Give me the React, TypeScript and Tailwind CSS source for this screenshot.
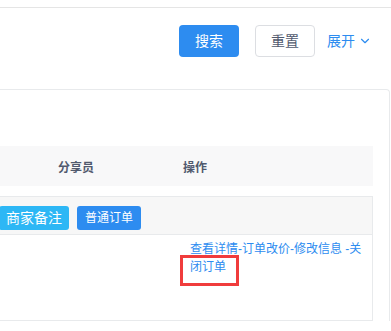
import { ChevronDown } from "lucide-react";

const FONT = { fontFamily: '"Liberation Sans", "Noto Sans CJK SC", sans-serif' };

export default function App() {
  return (
    <div className="w-[391px] h-[331px] overflow-hidden bg-white relative" style={FONT}>
      {/* top divider */}
      <div className="h-[7px]" />
      <div className="border-t border-[#e5e5e5]" />

      {/* search actions */}
      <div className="flex items-center justify-end pt-[17px] pr-[19px]">
        <button className="w-[60px] h-[32px] rounded-[4px] bg-[#2d8cf0] text-white text-[14px]">
          搜索
        </button>
        <button className="ml-[16px] w-[60px] h-[32px] rounded-[4px] border border-[#dcdee2] bg-white text-[#515a6e] text-[14px]">
          重置
        </button>
        <div className="ml-[12px] flex items-center text-[#2d8cf0] text-[14px]">
          展开
          <ChevronDown size={14} strokeWidth={2} className="ml-[3px]" />
        </div>
      </div>

      {/* card */}
      <div className="mt-[32px] -ml-[12px] mr-[1px] border-t border-r border-[#e8eaec] rounded-tr-[4px] pt-[56px] pr-[16px]">
        {/* table header */}
        <div className="flex h-[40px] items-center pt-[4px] bg-[#f8f8f9] text-[12px] font-bold text-[#515a6e]">
          <div className="w-[176px] text-center">分享员</div>
          <div className="pl-[19px]">操作</div>
        </div>

        {/* order block */}
        <div className="mt-[10px] border-t border-r border-b border-[#e8eaec]">
          <div className="flex h-[38px] items-start pt-[9px] bg-[#f7f7f7] border-b border-[#e8eaec]">
            <span className="ml-[11px] h-[24px] px-[7px] rounded-[3px] bg-[#2db7f5] text-white text-[14px] leading-[24px]">
              商家备注
            </span>
            <span className="ml-[8px] h-[24px] px-[8px] rounded-[3px] bg-[#2d8cf0] text-white text-[12px] leading-[24px]">
              普通订单
            </span>
          </div>
          <div className="h-[85px] pt-[5px] pl-[202px]">
            <div className="relative w-[174px] text-[12px] leading-[18px] text-[#2d8cf0]">
              查看详情-订单改价-修改信息 -关闭订单
              <span className="absolute left-[-10px] top-[15px] w-[59px] h-[31px] border-[3px] border-[#f03c3c]" />
            </div>
          </div>
        </div>
      </div>
    </div>
  );
}
